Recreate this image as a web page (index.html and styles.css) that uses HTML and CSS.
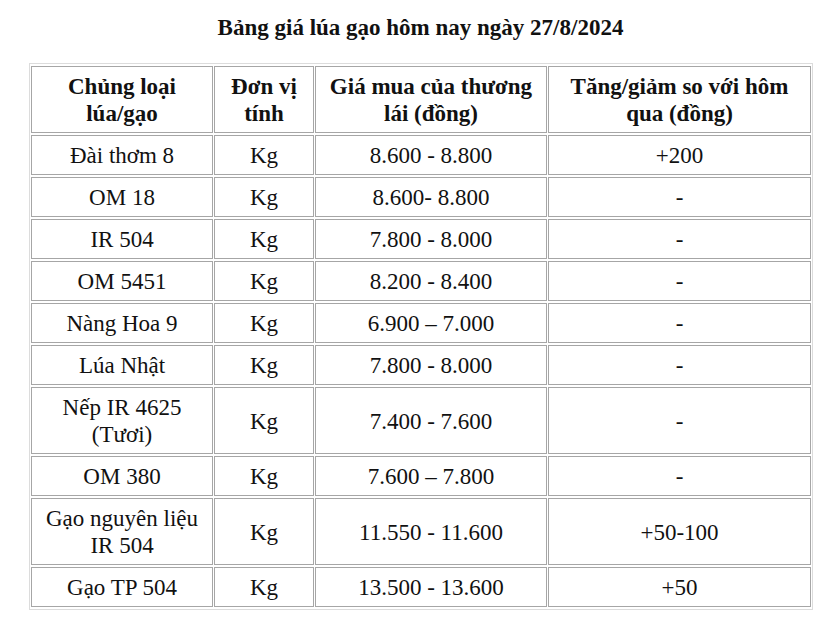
FILE: index.html
```html
<!DOCTYPE html>
<html lang="vi">
<head>
<meta charset="utf-8">
<title>Bảng giá lúa gạo</title>
<link rel="stylesheet" href="styles.css">
</head>
<body>
<div class="wrap">
  <h1 class="title">Bảng giá lúa gạo hôm nay ngày 27/8/2024</h1>
  <table class="price-table">
    <colgroup>
      <col class="c1"><col class="c2"><col class="c3"><col class="c4">
    </colgroup>
    <thead>
      <tr>
        <th>Chủng loại<br>lúa/gạo</th>
        <th>Đơn vị<br>tính</th>
        <th>Giá mua của thương<br>lái (đồng)</th>
        <th>Tăng/giảm so với hôm<br>qua (đồng)</th>
      </tr>
    </thead>
    <tbody>
      <tr><td>Đài thơm 8</td><td>Kg</td><td>8.600 - 8.800</td><td>+200</td></tr>
      <tr><td>OM 18</td><td>Kg</td><td>8.600- 8.800</td><td>-</td></tr>
      <tr><td>IR 504</td><td>Kg</td><td>7.800 - 8.000</td><td>-</td></tr>
      <tr><td>OM 5451</td><td>Kg</td><td>8.200 - 8.400</td><td>-</td></tr>
      <tr><td>Nàng Hoa 9</td><td>Kg</td><td>6.900 – 7.000</td><td>-</td></tr>
      <tr><td>Lúa Nhật</td><td>Kg</td><td>7.800 - 8.000</td><td>-</td></tr>
      <tr><td>Nếp IR 4625<br>(Tươi)</td><td>Kg</td><td>7.400 - 7.600</td><td>-</td></tr>
      <tr><td>OM 380</td><td>Kg</td><td>7.600 – 7.800</td><td>-</td></tr>
      <tr><td>Gạo nguyên liệu<br>IR 504</td><td>Kg</td><td>11.550 - 11.600</td><td>+50-100</td></tr>
      <tr><td>Gạo TP 504</td><td>Kg</td><td>13.500 - 13.600</td><td>+50</td></tr>
    </tbody>
  </table>
</div>
</body>
</html>
```
FILE: styles.css
```css
html, body {
  margin: 0;
  padding: 0;
  background: #ffffff;
}
body {
  font-family: "Liberation Serif", "Times New Roman", "DejaVu Serif", serif;
  color: #111111;
  font-size: 23px;
  line-height: 27px;
}
.wrap {
  width: 783px;
  margin-left: 29px;
  padding-top: 14px;
}
.title {
  margin: 0 0 22px 0;
  font-family: "Liberation Serif", "Times New Roman", serif;
  font-size: 23px;
  line-height: 27px;
  font-weight: bold;
  text-align: center;
}
.price-table {
  width: 783px;
  table-layout: fixed;
  border: 1px solid #dcdcdc;
  border-spacing: 1px 2px;
  border-collapse: separate;
  font-family: "Liberation Serif", "Times New Roman", serif;
}
.price-table .c1 { width: 182px; }
.price-table .c2 { width: 100px; }
.price-table .c3 { width: 232px; }
.price-table .c4 { width: 263px; }
.price-table th,
.price-table td {
  border: 1px solid #a6a6a6;
  padding: 6px 2px 5px 2px;
  text-align: center;
  vertical-align: middle;
  font-family: "Liberation Serif", "Times New Roman", serif;
  font-size: 23px;
  line-height: 27px;
  color: #111111;
}
.price-table th {
  font-weight: bold;
}
.price-table td {
  font-weight: normal;
}
```
